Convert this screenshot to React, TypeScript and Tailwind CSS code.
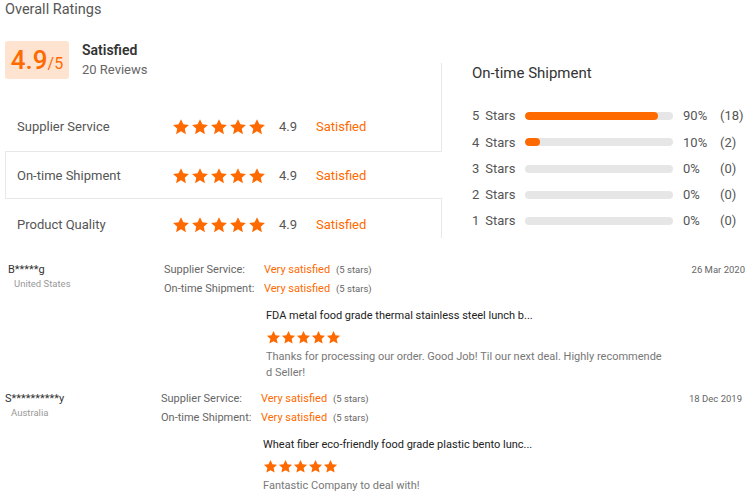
import React from 'react';

const ORANGE = 'text-[#ff6a00]';

function Star({ size }: { size: number }) {
  return (
    <svg width={size} height={size} viewBox="0 0 24 24" className="shrink-0">
      <path
        d="M12 1.5l3.2 6.9 7.3.8-5.5 5 1.6 7.4L12 17.8l-6.6 3.8L7 14.2l-5.5-5 7.3-.8z"
        fill="#ff6a00"
      />
    </svg>
  );
}

function Stars({ size, gap }: { size: number; gap: string }) {
  return (
    <div className={`flex ${gap}`}>
      {[0, 1, 2, 3, 4].map((i) => (
        <Star key={i} size={size} />
      ))}
    </div>
  );
}

function RatingRow({ label }: { label: string }) {
  return (
    <>
      <span className="w-[155px] text-[13px] text-[#555]">{label}</span>
      <Stars size={18} gap="gap-[1px]" />
      <span className="ml-[13px] w-[37px] text-[13px] text-[#555]">4.9</span>
      <span className={`text-[13px] ${ORANGE}`}>Satisfied</span>
    </>
  );
}

const BARS = [
  { n: 5, pct: 90, count: 18 },
  { n: 4, pct: 10, count: 2 },
  { n: 3, pct: 0, count: 0 },
  { n: 2, pct: 0, count: 0 },
  { n: 1, pct: 0, count: 0 },
];

const REVIEWS = [
  {
    name: 'B*****g',
    country: 'United States',
    date: '26 Mar 2020',
    product: 'FDA metal food grade thermal stainless steel lunch b...',
    comment: 'Thanks for processing our order. Good Job! Til our next deal. Highly recommended Seller!',
    pad: 'pl-[8px] pr-[5px]',
  },
  {
    name: 'S**********y',
    country: 'Australia',
    date: '18 Dec 2019',
    product: 'Wheat fiber eco-friendly food grade plastic bento lunc...',
    comment: 'Fantastic Company to deal with!',
    pad: 'pl-[5px] pr-[8px]',
  },
];

export default function App() {
  return (
    <div className="w-[750px] h-[500px] overflow-hidden bg-white font-['Roboto',sans-serif]">
      <h1 className="pl-[5px] pt-px text-[14.5px] leading-[18px] text-[#555]">Overall Ratings</h1>

      {/* Summary */}
      <div className="mt-[44px] flex">
        <div className="ml-[5px] w-[437px]">
          <div className="flow-root border-r border-[#e8e8e8]">
            <div className="-mt-[23px] flex items-center">
              <div className="flex h-[38px] w-[64px] items-baseline justify-center rounded-[3px] bg-[#fee3d0] pt-[3px] text-[#ff6a00]">
                <span className="text-[26px] font-medium leading-[32px]">4.9</span>
                <span className="text-[16px]">/5</span>
              </div>
              <div className="ml-[13px] flex flex-col">
                <span className="text-[14px] font-semibold leading-[20px] text-[#333]">Satisfied</span>
                <span className="text-[13px] leading-[20px] text-[#666]">20 Reviews</span>
              </div>
            </div>
            <div className="mt-[22px] flex h-[49px] items-center pl-[12px]">
              <RatingRow label="Supplier Service" />
            </div>
          </div>
          <div className="flex h-[48px] items-center border-y border-l border-[#e8e8e8] pl-[11px] pt-px">
            <RatingRow label="On-time Shipment" />
          </div>
          <div className="flex h-[39px] items-center border-r border-[#e8e8e8] pl-[12px] pt-[12px]">
            <RatingRow label="Product Quality" />
          </div>
        </div>

        <div className="pl-[30px] text-[13px]">
          <div className="text-[15px] leading-[20px] text-[#333]">On-time Shipment</div>
          <div className="mt-[20px]">
            {BARS.map((b) => (
              <div key={b.n} className="flex h-[26.25px] items-center text-[#555]">
                <span className="w-[53px]">
                  {b.n}
                  <span className="ml-[6px]">Stars</span>
                </span>
                <div className="h-[8px] w-[148px] overflow-hidden rounded-full bg-[#e6e6e6]">
                  <div className="h-full rounded-full bg-[#ff6a00]" style={{ width: `${b.pct}%` }} />
                </div>
                <span className="ml-[10px] w-[37px]">{b.pct}%</span>
                <span>({b.count})</span>
              </div>
            ))}
          </div>
        </div>
      </div>

      {/* Reviews */}
      <div className="mt-[22px]">
        {REVIEWS.map((r, i) => (
          <div key={r.name} className={`flex ${r.pad} ${i > 0 ? 'mt-[8px]' : ''}`}>
            <div className="w-[156px]">
              <div className="text-[11px] leading-[19px] text-[#333]">{r.name}</div>
              <div className="-mt-[2px] pl-[6px] text-[9.5px] leading-[14px] text-[#999]">{r.country}</div>
            </div>
            <div className="flex-1">
              <div className="text-[11px] leading-[19px]">
                <div className="flex items-center">
                  <span className="w-[100px] text-[#666]">Supplier Service:</span>
                  <span className={ORANGE}>Very satisfied</span>
                  <span className="ml-[6px] text-[9.5px] text-[#666]">(5 stars)</span>
                </div>
                <div className="flex items-center">
                  <span className="w-[100px] text-[#666]">On-time Shipment:</span>
                  <span className={ORANGE}>Very satisfied</span>
                  <span className="ml-[6px] text-[9.5px] text-[#666]">(5 stars)</span>
                </div>
              </div>
              <div className="ml-[102px] w-[397px]">
                <div className="mt-[10px] text-[11px] leading-[16px] text-[#222]">{r.product}</div>
                <div className="mt-[6px]">
                  <Stars size={15} gap="gap-[0px]" />
                </div>
                <p className="mt-[4px] break-all text-[11px] leading-[16px] text-[#777]">{r.comment}</p>
              </div>
            </div>
            <div className="text-[9.5px] leading-[19px] text-[#666]">{r.date}</div>
          </div>
        ))}
      </div>
    </div>
  );
}
